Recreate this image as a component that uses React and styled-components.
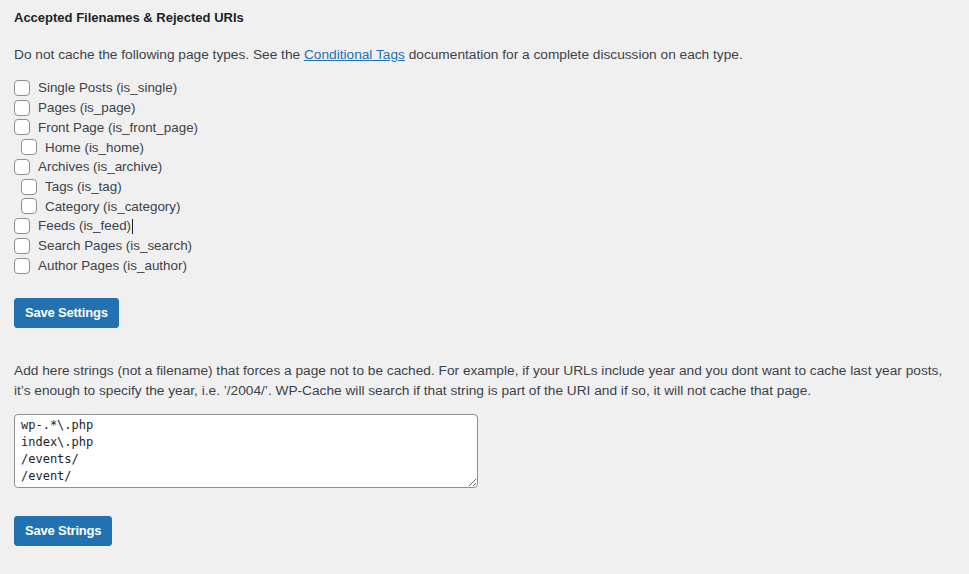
import React from 'react'
import styled, { createGlobalStyle } from 'styled-components'

const GlobalStyle = createGlobalStyle`
  html, body {
    margin: 0;
    background: #f0f0f1;
  }
  body {
    font-family: "Liberation Sans", Arial, sans-serif;
    font-size: 13px;
    color: #3c434a;
  }
`

const Page = styled.div`
  padding: 10px 14px 20px;
`

const Heading = styled.h3`
  margin: 0 0 19px;
  font-size: 13px;
  font-weight: 700;
  color: #1d2327;
  line-height: 16px;
`

const Text = styled.p`
  margin: 0;
  font-size: 13.7px;
  line-height: 20px;
`

const Link = styled.a`
  color: #2271b1;
  text-decoration: underline;
`

const List = styled.div`
  display: flex;
  flex-direction: column;
  margin: 13px 0 22px;
`

const Row = styled.label`
  display: flex;
  align-items: center;
  gap: 8px;
  height: 19.75px;
  padding-left: ${(p) => (p.$nested ? 7 : 0)}px;
  font-size: 13.4px;
  color: #3c434a;
`

const Box = styled.span`
  width: 16px;
  height: 16px;
  box-sizing: border-box;
  border: 1px solid #8c8f94;
  border-radius: 4px;
  background: #fff;
  flex: none;
`

const Caret = styled.span`
  display: inline-block;
  width: 1px;
  height: 15px;
  background: #1d2327;
  vertical-align: middle;
  margin-left: 1px;
`

const Button = styled.button`
  display: block;
  height: 30px;
  padding: 0 10px;
  border: 1px solid #2271b1;
  border-radius: 3px;
  background: #2271b1;
  color: #fff;
  font-family: "Liberation Sans", Arial, sans-serif;
  font-size: 13px;
  font-weight: 700;
  letter-spacing: -0.2px;
  cursor: pointer;
`

const StringsBlock = styled.div`
  margin-top: 33px;
`

const Area = styled.textarea`
  display: block;
  box-sizing: border-box;
  width: 464px;
  height: 74px;
  margin: 13px 0 28px;
  padding: 2px 6px;
  border: 1px solid #8c8f94;
  border-radius: 4px;
  background: #fff;
  color: #1d2327;
  font-family: "DejaVu Sans Mono", monospace;
  font-size: 12px;
  line-height: 17px;
  resize: both;
  overflow: hidden;
`

const pageTypes = [
  { label: 'Single Posts (is_single)' },
  { label: 'Pages (is_page)' },
  { label: 'Front Page (is_front_page)' },
  { label: 'Home (is_home)', nested: true },
  { label: 'Archives (is_archive)' },
  { label: 'Tags (is_tag)', nested: true },
  { label: 'Category (is_category)', nested: true },
  { label: 'Feeds (is_feed)', caret: true },
  { label: 'Search Pages (is_search)' },
  { label: 'Author Pages (is_author)' },
]

const rejected = 'wp-.*\\.php\nindex\\.php\n/events/\n/event/'

export default function App() {
  return (
    <Page>
      <GlobalStyle />
      <Heading>Accepted Filenames &amp; Rejected URIs</Heading>
      <Text>
        Do not cache the following page types. See the <Link href="#">Conditional Tags</Link>{' '}
        documentation for a complete discussion on each type.
      </Text>
      <List>
        {pageTypes.map((t) => (
          <Row key={t.label} $nested={t.nested}>
            <Box />
            <span>
              {t.label}
              {t.caret && <Caret />}
            </span>
          </Row>
        ))}
      </List>
      <Button>Save Settings</Button>
      <StringsBlock>
        <Text>
          Add here strings (not a filename) that forces a page not to be cached. For example, if your URLs
          include year and you dont want to cache last year posts, it’s enough to specify the year, i.e.
          ’/2004/’. WP-Cache will search if that string is part of the URI and if so, it will not cache that
          page.
        </Text>
        <Area defaultValue={rejected} spellCheck={false} />
        <Button>Save Strings</Button>
      </StringsBlock>
    </Page>
  )
}
